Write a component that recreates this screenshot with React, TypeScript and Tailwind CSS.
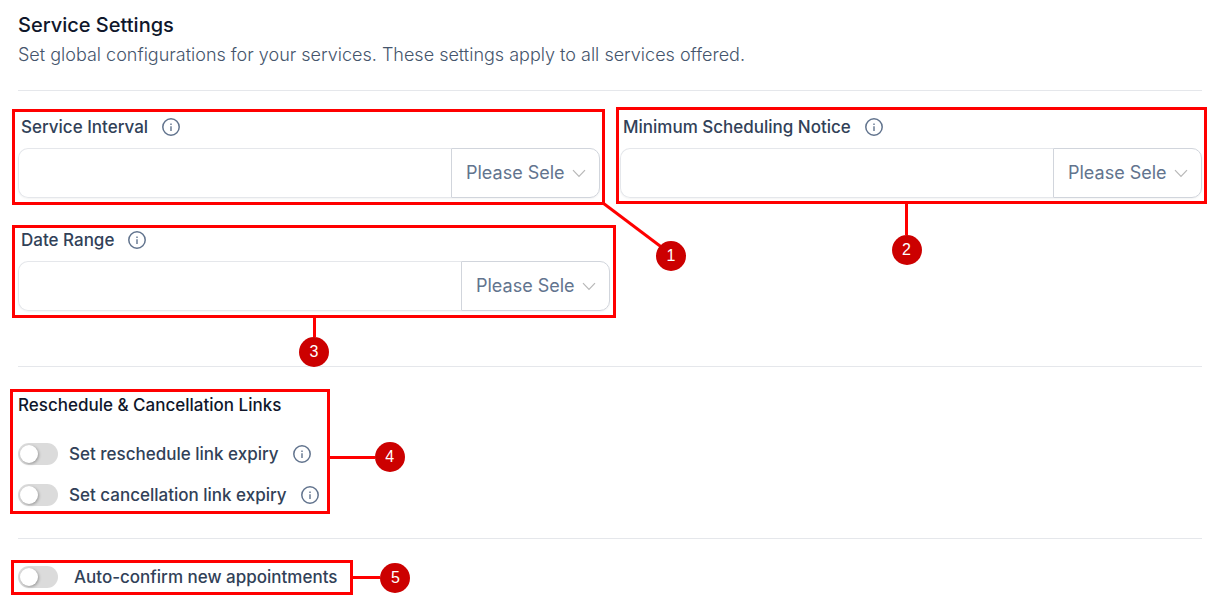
import { useState } from 'react';
import type { ReactNode } from 'react';

function InfoButton({ label }: { label: string }) {
  return (
    <button type="button" aria-label={label} className="flex-shrink-0 text-slate-500">
      <svg className="w-[18px] h-[18px]" viewBox="0 0 18 18" fill="none" stroke="currentColor">
        <circle cx="9" cy="9" r="8.2" strokeWidth="1.5" />
        <path d="M9 8.2v4.8M9 5.4v1.5" strokeWidth="1.4" />
      </svg>
    </button>
  );
}

function Badge({ children }: { children: ReactNode }) {
  return (
    <span className="flex-shrink-0 w-[30px] h-[30px] rounded-full bg-[#cc0000] text-white text-base leading-none font-['Liberation_Sans',sans-serif] flex items-center justify-center">
      {children}
    </span>
  );
}

interface FieldProps {
  id: string;
  label: string;
  unitLabel: string;
}

function DurationField({ id, label, unitLabel }: FieldProps) {
  const [value, setValue] = useState('');

  return (
    <div>
      <div className="flex items-center gap-[14px] pl-[3px]">
        <label htmlFor={id} className="text-[17px] leading-6 font-medium text-slate-700">
          {label}
        </label>
        <InfoButton label={`About ${label}`} />
      </div>
      <div className="flex mt-[9px] h-[50px] rounded-[10px] shadow-xs">
        <input
          id={id}
          type="text"
          value={value}
          onChange={(e) => setValue(e.target.value)}
          className="flex-1 min-w-0 rounded-l-[10px] border border-r-0 border-gray-200 px-4 text-lg text-slate-700 outline-none"
        />
        <div className="relative w-[149px]">
          <select
            aria-label={unitLabel}
            className="appearance-none w-full h-full rounded-r-[10px] border border-gray-300 bg-white pl-[14px] pr-[34px] text-lg text-slate-500 outline-none"
          >
            <option>Please Select</option>
            <option>Minutes</option>
            <option>Hours</option>
            <option>Days</option>
          </select>
          <svg
            className="absolute right-[14px] top-[21px] w-[14px] h-[9px] pointer-events-none"
            viewBox="0 0 14 9"
            fill="none"
            stroke="#b8b8b8"
            strokeWidth="1.2"
          >
            <path d="M1 1.2l6 6.3 6-6.3" />
          </svg>
        </div>
      </div>
    </div>
  );
}

interface ToggleProps {
  id: string;
  label: string;
  className?: string;
  info?: boolean;
}

function Toggle({ id, label, className = 'gap-[11px]', info = true }: ToggleProps) {
  const [checked, setChecked] = useState(false);

  return (
    <div className="flex items-center gap-[14px]">
      <div className={`flex items-center ${className}`}>
        <input
          id={id}
          type="checkbox"
          role="switch"
          checked={checked}
          onChange={() => setChecked(!checked)}
          className="appearance-none flex items-center w-10 h-[22px] px-[2px] rounded-full bg-[#dbdbdb] checked:bg-blue-600 before:w-[18px] before:h-[18px] before:rounded-full before:bg-white before:shadow-[1px_1px_3px_rgba(0,0,0,0.3)] checked:before:translate-x-[18px]"
        />
        <label htmlFor={id} className="text-[17px] leading-6 font-medium text-slate-700">
          {label}
        </label>
      </div>
      {info && <InfoButton label={`About ${label}`} />}
    </div>
  );
}

export default function App() {
  return (
    <main className="bg-white pl-[18px] pr-[19px] pt-[11px] pb-[15px] font-['Inter',sans-serif]">
      {/* Header */}
      <header>
        <h1 className="text-xl leading-7 font-medium text-slate-900">Service Settings</h1>
        <p className="mt-1 text-lg leading-6 font-light text-slate-600">
          Set global configurations for your services. These settings apply to all services offered.
        </p>
      </header>

      <hr className="mt-[23px] border-gray-200" />

      {/* Intervals */}
      <section className="mt-6">
        <div className="grid grid-cols-2 gap-5">
          <div className="relative">
            <DurationField id="interval" label="Service Interval" unitLabel="Service interval unit" />
            <div className="absolute -left-[6px] -right-[5px] -top-[6px] -bottom-[7px] border-3 border-[#ff0000] pointer-events-none">
              <div className="absolute left-full top-full z-10">
                <svg className="w-16 h-12" viewBox="0 0 64 48" stroke="#ff0000" strokeWidth="3">
                  <path d="M1 1l61 46" />
                </svg>
                <div className="absolute left-[54px] top-[39px]">
                  <Badge>1</Badge>
                </div>
              </div>
            </div>
          </div>
          <div className="relative">
            <DurationField id="notice" label="Minimum Scheduling Notice" unitLabel="Minimum notice unit" />
            <div className="absolute -left-1 -right-[5px] -top-2 -bottom-[6px] border-3 border-[#ff0000] pointer-events-none">
              <div className="absolute left-[calc(50%-20px)] top-full flex flex-col items-center">
                <span className="w-[3px] h-[34px] bg-[#ff0000]" />
                <Badge>2</Badge>
              </div>
            </div>
          </div>
        </div>

        <div className="relative mt-[30px] w-1/2">
          <DurationField id="range" label="Date Range" unitLabel="Date range unit" />
          <div className="absolute -left-[6px] -right-[6px] -top-[3px] -bottom-[7px] border-3 border-[#ff0000] pointer-events-none">
            <div className="absolute inset-x-0 top-full flex flex-col items-center">
              <span className="w-[3px] h-[22px] bg-[#ff0000]" />
              <Badge>3</Badge>
            </div>
          </div>
        </div>
      </section>

      <hr className="mt-[55px] border-gray-200" />

      {/* Links */}
      <section className="relative mt-[26px] w-fit">
        <h2 className="text-[17px] leading-6 font-medium text-slate-900">Reschedule &amp; Cancellation Links</h2>
        <div className="mt-[25px] flex flex-col gap-[17px]">
          <Toggle id="reschedule" label="Set reschedule link expiry" />
          <Toggle id="cancellation" label="Set cancellation link expiry" />
        </div>
        <div className="absolute -left-2 -right-[11px] -top-1 -bottom-[7px] border-3 border-[#ff0000] pointer-events-none">
          <div className="absolute left-full top-[50px] flex items-center">
            <span className="w-12 h-[3px] bg-[#ff0000]" />
            <Badge>4</Badge>
          </div>
        </div>
      </section>

      <hr className="mt-[31px] border-gray-200" />

      {/* Auto-confirm */}
      <section className="relative mt-[26px] w-fit">
        <Toggle id="auto-confirm" label="Auto-confirm new appointments" className="gap-4" info={false} />
        <div className="absolute -left-[7px] -right-4 -top-[5px] -bottom-[6px] border-3 border-[#ff0000] pointer-events-none">
          <div className="absolute left-full inset-y-0 flex items-center">
            <span className="w-[30px] h-[3px] bg-[#ff0000]" />
            <Badge>5</Badge>
          </div>
        </div>
      </section>
    </main>
  );
}
